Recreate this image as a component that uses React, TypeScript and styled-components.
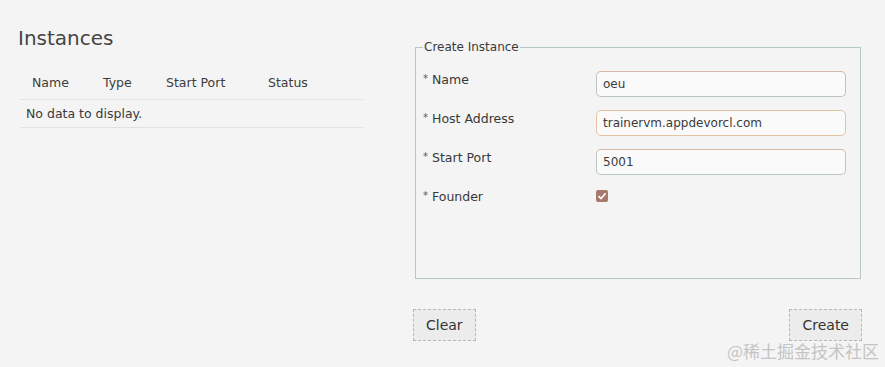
import { createGlobalStyle } from "styled-components";
import styled from "styled-components";

const GlobalStyle = createGlobalStyle`
  html, body {
    margin: 0;
    padding: 0;
    background: #f4f4f4;
  }
  body {
    font-family: "DejaVu Sans", "Noto Sans CJK SC", sans-serif;
    color: #3a3a3a;
  }
`;

const Page = styled.div`
  display: grid;
  grid-template-columns: 345px 449px;
  column-gap: 50px;
  padding: 26px 0 0 18px;
  height: 367px;
  box-sizing: border-box;
  position: relative;
`;

const Title = styled.h1`
  margin: 0 0 20px 0;
  font-size: 20px;
  font-weight: normal;
  line-height: 24px;
  color: #444;
`;

const Table = styled.table`
  margin-left: 2px;
  width: 343px;
  border-collapse: collapse;
  table-layout: fixed;
  font-size: 12.5px;
`;

const Th = styled.th<{ $w?: number }>`
  text-align: left;
  font-weight: normal;
  padding: 4px 0 8px 12px;
  height: 17px;
  width: ${(p) => (p.$w ? `${p.$w}px` : "auto")};
  border-bottom: 1px solid #e2e2e2;
  color: #3d3d3d;
`;

const Td = styled.td`
  padding: 6px 6px 6px 6px;
  border-bottom: 1px solid #e2e2e2;
`;

const Right = styled.div`
  display: flex;
  flex-direction: column;
  padding-top: 14px;
`;

const Fieldset = styled.fieldset`
  margin: 0 0 0 2px;
  padding: 17px 14px 0 7px;
  width: 446px;
  height: 239px;
  box-sizing: border-box;
  border: 1px solid #b5c7c7;
  display: flex;
  flex-direction: column;
  gap: 13px;
`;

const Legend = styled.legend`
  font-size: 12px;
  padding: 0 1px;
  margin-left: 0;
  color: #3a3a3a;
`;

const Row = styled.div`
  display: grid;
  grid-template-columns: 173px 250px;
  align-items: start;
  height: 26px;
`;

const Label = styled.label`
  font-size: 12.5px;
  padding-top: 1px;
  color: #383838;
`;

const Star = styled.span`
  font-size: 10px;
  color: #555;
  margin-right: 4px;
  vertical-align: 2px;
`;

const Input = styled.input<{ $focus?: boolean }>`
  box-sizing: border-box;
  width: 250px;
  height: 26px;
  padding: 0 6px;
  font-family: "DejaVu Sans", sans-serif;
  font-size: 12px;
  color: #3a3a3a;
  background: #fafafa;
  border-radius: 5px;
  border: 1px solid ${(p) => (p.$focus ? "#e4c3a2" : "#b9c4c4")};
  border-top-color: ${(p) => (p.$focus ? "#e4c3a2" : "#d2b8a4")};
  outline: none;
`;

const Check = styled.span`
  display: inline-flex;
  align-items: center;
  justify-content: center;
  width: 12px;
  height: 12px;
  margin-top: 2px;
  border-radius: 2px;
  background: #a8786a;
`;

const Buttons = styled.div`
  display: flex;
  justify-content: space-between;
  margin-top: 30px;
`;

const Button = styled.button`
  height: 32px;
  padding: 0 12px;
  font-family: "DejaVu Sans", sans-serif;
  font-size: 14px;
  color: #333;
  background: #ececec;
  border: 1px dashed #b8b8b8;
  border-radius: 0;
`;

const Watermark = styled.div`
  position: absolute;
  right: 6px;
  bottom: 4px;
  font-family: "Noto Sans CJK SC", sans-serif;
  font-size: 17px;
  color: #c4c4c4;
`;

export default function App() {
  return (
    <>
      <GlobalStyle />
      <Page>
        <div>
          <Title>Instances</Title>
          <Table>
            <thead>
              <tr>
                <Th $w={59}>Name</Th>
                <Th $w={51}>Type</Th>
                <Th $w={90}>Start Port</Th>
                <Th>Status</Th>
              </tr>
            </thead>
            <tbody>
              <tr>
                <Td colSpan={4}>No data to display.</Td>
              </tr>
            </tbody>
          </Table>
        </div>
        <Right>
          <Fieldset>
            <Legend>Create Instance</Legend>
            <Row>
              <Label><Star>*</Star>Name</Label>
              <Input defaultValue="oeu" />
            </Row>
            <Row>
              <Label><Star>*</Star>Host Address</Label>
              <Input $focus defaultValue="trainervm.appdevorcl.com" />
            </Row>
            <Row>
              <Label><Star>*</Star>Start Port</Label>
              <Input defaultValue="5001" />
            </Row>
            <Row>
              <Label><Star>*</Star>Founder</Label>
              <Check>
                <svg width="10" height="10" viewBox="0 0 10 10">
                  <path d="M1.5 5.2 L4 7.6 L8.6 2.2" fill="none" stroke="#fff" strokeWidth="1.6" />
                </svg>
              </Check>
            </Row>
          </Fieldset>
          <Buttons>
            <Button>Clear</Button>
            <Button>Create</Button>
          </Buttons>
        </Right>
        <Watermark>@稀土掘金技术社区</Watermark>
      </Page>
    </>
  );
}
